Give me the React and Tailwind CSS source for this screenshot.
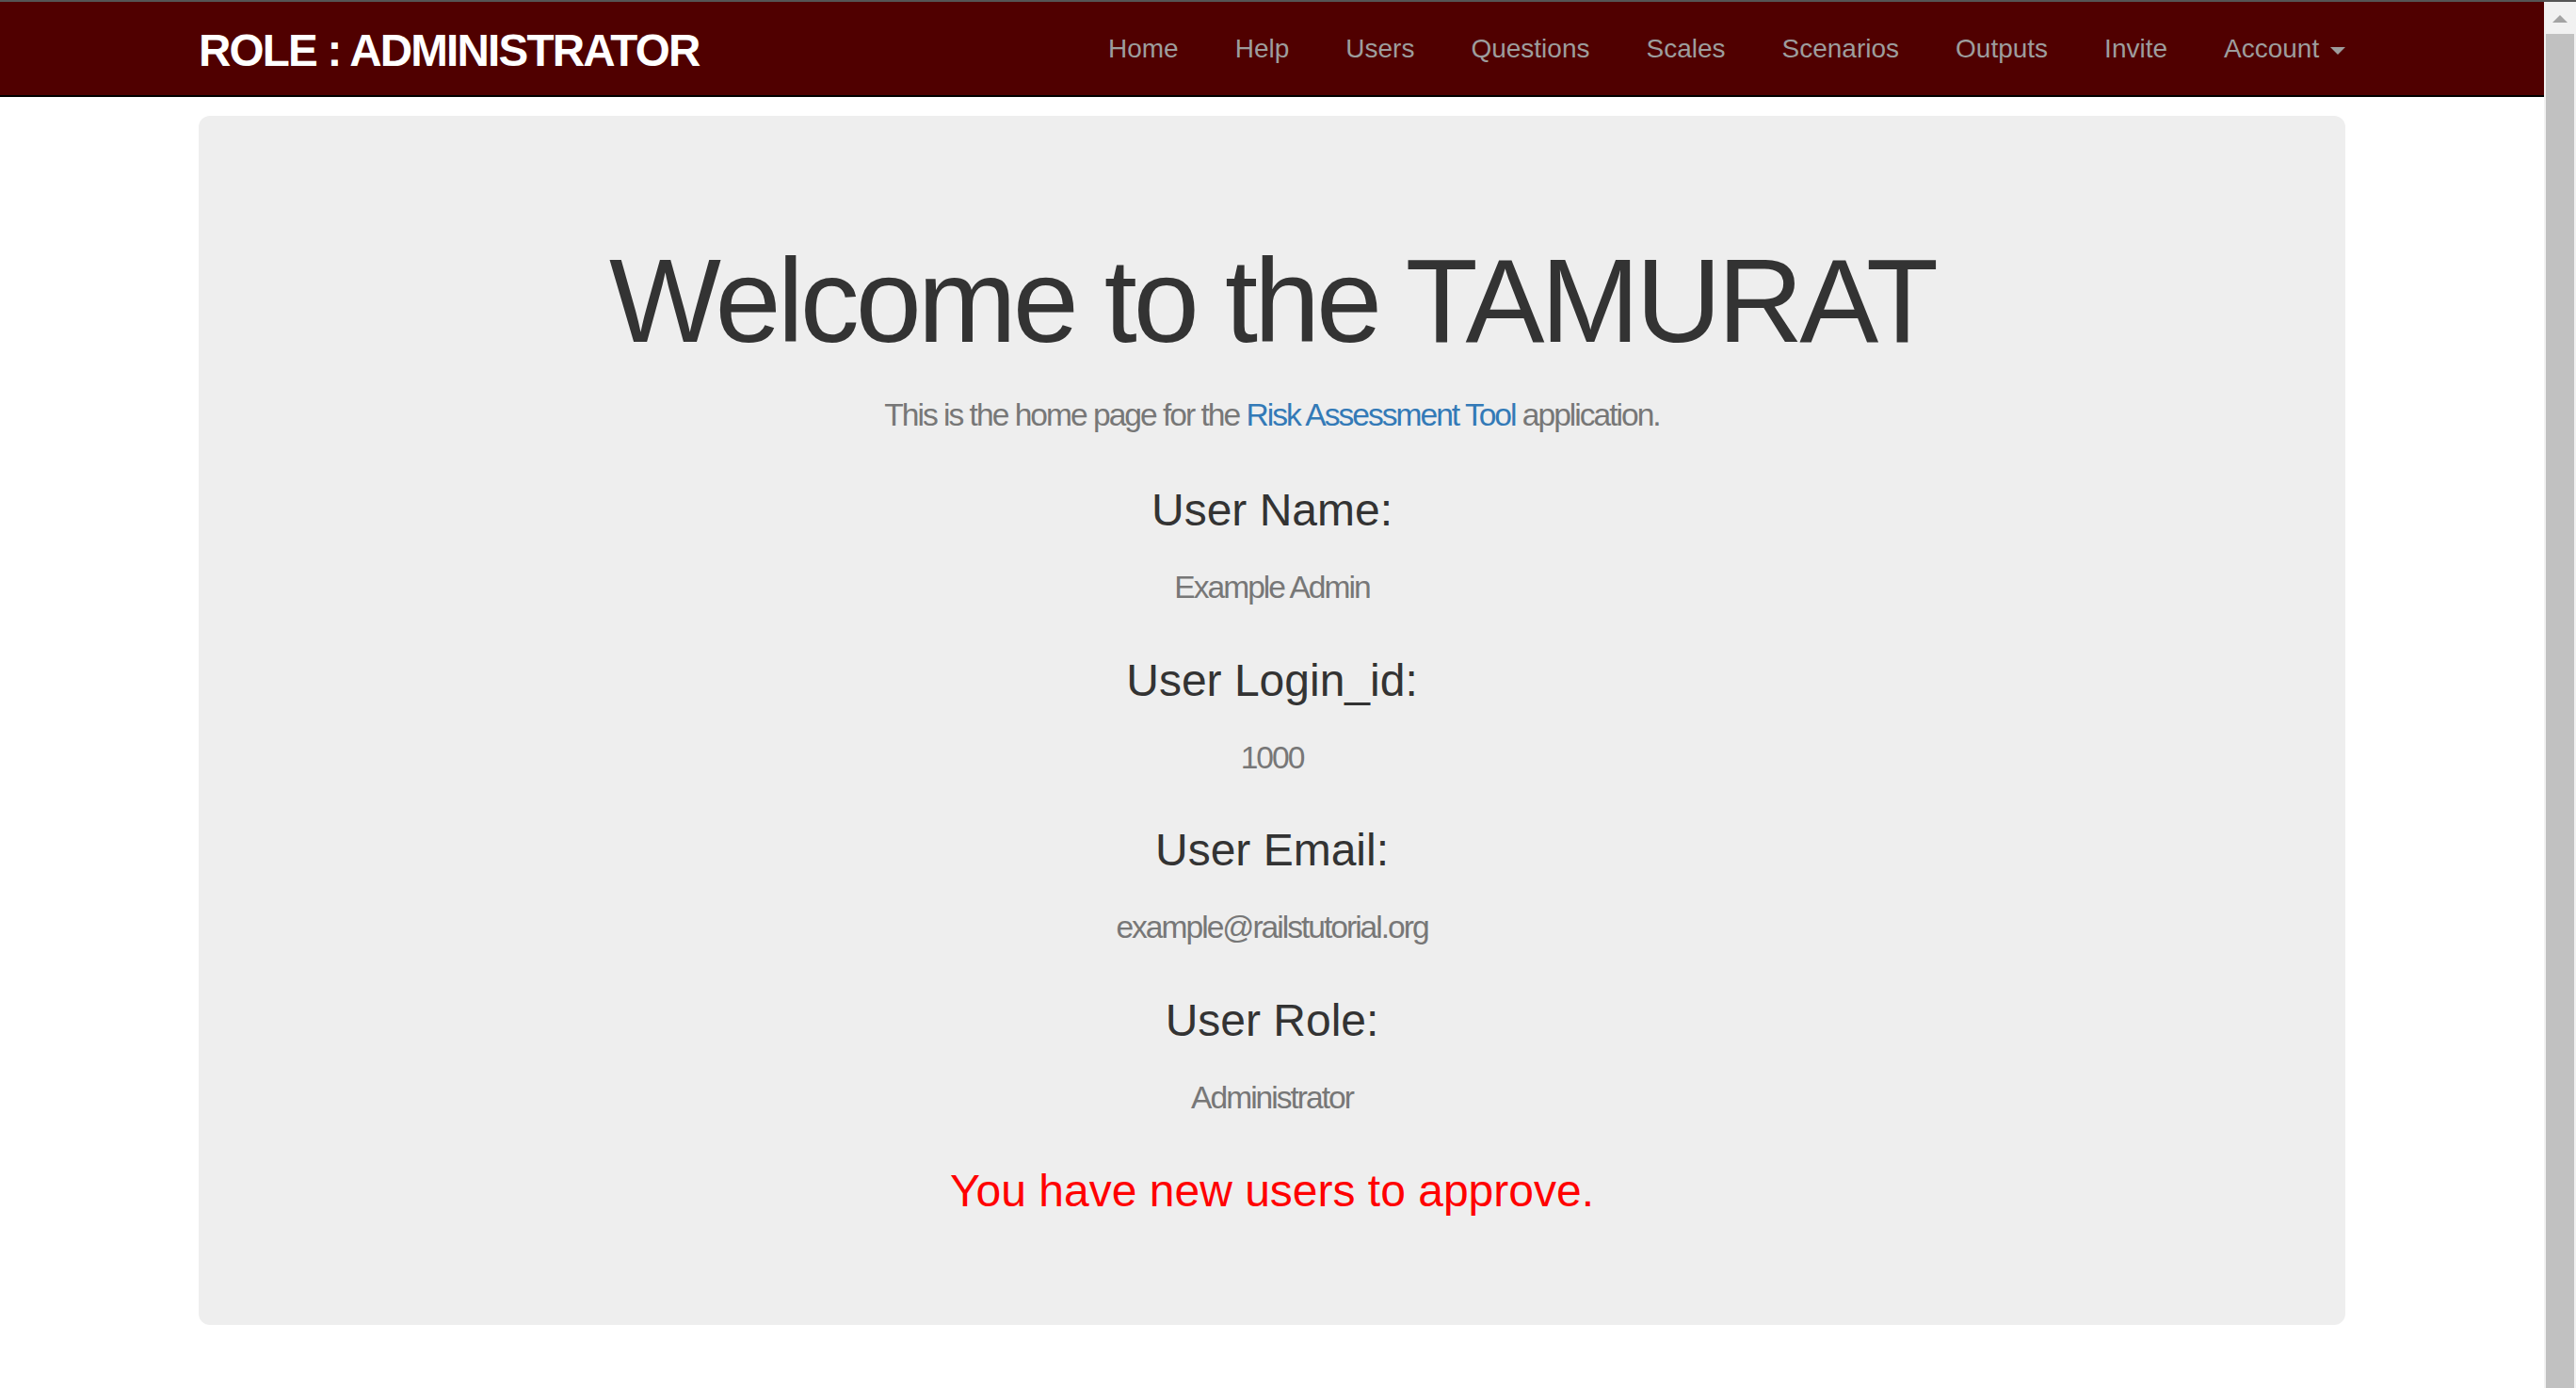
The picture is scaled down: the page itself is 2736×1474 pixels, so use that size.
const NAV = ["Home", "Help", "Users", "Questions", "Scales", "Scenarios", "Outputs", "Invite"];

function Scrollbar() {
  return (
    <div className="w-[34px] shrink-0 bg-[#f1f1f1] flex flex-col items-center pt-[14px]">
      <span className="w-0 h-0 border-b-[8px] border-x-[8px] border-b-[#a3a3a3] border-x-transparent" />
      <div className="mt-[12px] w-[30px] flex-1 bg-[#c1c1c1]" />
    </div>
  );
}

function Field({ label, value, first }) {
  return (
    <>
      <h3 className={`${first ? "mt-[61px]" : "mt-[58px]"} text-[48px] leading-none text-[#333]`}>{label}</h3>
      <h2 className="mt-[41px] text-[33.6px] leading-none tracking-[-2px] text-[#777]">{value}</h2>
    </>
  );
}

export default function App() {
  return (
    <div className="h-screen flex flex-col bg-white font-['Liberation_Sans',Arial,sans-serif] overflow-hidden">
      <div className="h-[2px] shrink-0 bg-[#555]" />
      <div className="flex flex-1 min-h-0">
        <div className="flex-1 min-w-0">
          {/* Navbar */}
          <nav className="h-[101px] bg-[#500000] border-b-2 border-black">
            <div className="mx-auto w-[2340px] px-[30px] flex items-start justify-between">
              <a className="mt-[28px] text-[47.6px] font-bold leading-none tracking-[-1.8px] text-white uppercase">
                Role : Administrator
              </a>
              <ul className="flex -mr-[30px]">
                {NAV.map((n) => (
                  <li key={n}>
                    <a className="block px-[30px] pt-[30px] leading-[40px] text-[28px] text-[#9d9d9d]">{n}</a>
                  </li>
                ))}
                <li>
                  <a className="block px-[30px] pt-[30px] leading-[40px] text-[28px] text-[#9d9d9d]">
                    Account{" "}
                    <span className="inline-block w-0 h-0 ml-[4px] align-middle border-t-[8px] border-x-[8px] border-t-[#9d9d9d] border-x-transparent" />
                  </a>
                </li>
              </ul>
            </div>
          </nav>

          {/* Jumbotron */}
          <div className="mx-auto w-[2340px] px-[30px] mt-[20px]">
            <div className="bg-[#eee] rounded-[12px] px-[120px] pt-[128px] pb-[118px] flex flex-col items-center text-center">
              <h1 className="text-[126px] leading-[1.1] tracking-[-4px] text-[#333]">Welcome to the TAMURAT</h1>
              <h2 className="mt-[34px] text-[33.6px] leading-none tracking-[-2px] text-[#777]">
                This is the home page for the <a className="text-[#337ab7]">Risk Assessment Tool</a> application.
              </h2>
              <Field first label="User Name:" value="Example Admin" />
              <Field label="User Login_id:" value="1000" />
              <Field label="User Email:" value="example@railstutorial.org" />
              <Field label="User Role:" value="Administrator" />
              <h3 className="mt-[58px] text-[48px] leading-none text-[#f00]">You have new users to approve.</h3>
            </div>
          </div>
        </div>
        <Scrollbar />
      </div>
    </div>
  );
}
